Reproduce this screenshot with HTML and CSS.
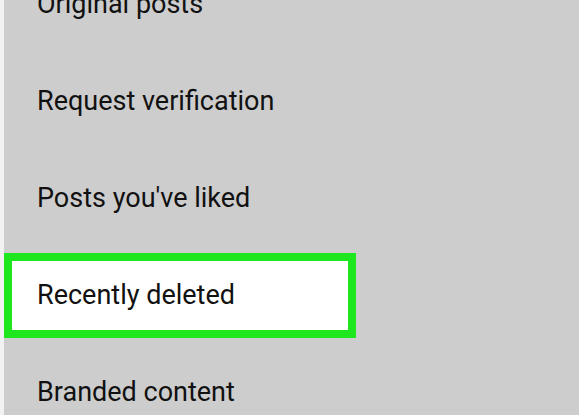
FILE: index.html
```html
<!DOCTYPE html>
<html lang="en">
<head>
    <meta charset="UTF-8">
    <meta name="viewport" content="width=device-width, initial-scale=1.0">
    <title>Settings - Account</title>
    <link rel="stylesheet" href="styles.css">
</head>
<body>
    <div class="menu-panel">
        <ul class="menu-list">
            <li class="menu-item"><span class="menu-label">Original posts</span></li>
            <li class="menu-item"><span class="menu-label">Request verification</span></li>
            <li class="menu-item"><span class="menu-label">Posts you've liked</span></li>
            <li class="menu-item">
                <div class="highlight-box">
                    <span class="menu-label">Recently deleted</span>
                </div>
            </li>
            <li class="menu-item"><span class="menu-label">Branded content</span></li>
        </ul>
    </div>
</body>
</html>
```

FILE: styles.css
```css
* {
    margin: 0;
    padding: 0;
    box-sizing: border-box;
    font-family: Roboto, 'Liberation Sans', Arial, sans-serif;
}

html, body {
    height: 100%;
    overflow: hidden;
}

body {
    background-color: #cdcdcd;
}

.menu-panel {
    display: flow-root;
    height: 100%;
    border-left: 4px solid #f2f2f2;
}

.menu-list {
    list-style: none;
    margin-top: -44px;
}

.menu-item {
    height: 97px;
    display: flex;
    align-items: center;
    padding-left: 33px;
    color: #111;
    font-size: 27px;
}

.highlight-box {
    width: 352px;
    height: 85px;
    margin-left: -33px;
    padding-left: 25px;
    display: flex;
    align-items: center;
    background-color: #fff;
    border: 8px solid #1ee71e;
}

.menu-label {
    line-height: 1;
}
```
